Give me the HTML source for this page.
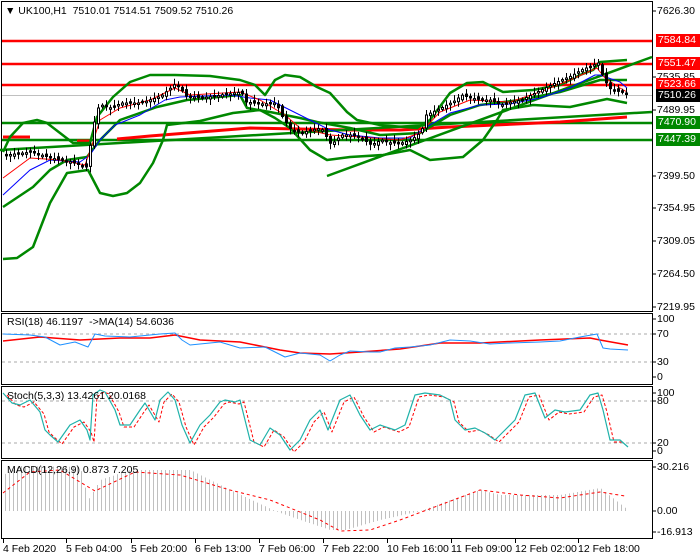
<!DOCTYPE html>
<html><head><meta charset="utf-8"><style>
html,body{margin:0;padding:0;background:#fff;width:700px;height:560px;overflow:hidden}
body{position:relative;font-family:"Liberation Sans",sans-serif;font-size:10.5px;color:#000}
.t{position:absolute;white-space:nowrap;line-height:12px}
.lb{position:absolute;left:656px;width:44px;height:13px;line-height:13px;color:#fff;padding-left:2px;box-sizing:border-box}
</style></head><body>
<svg id="s" width="700" height="560" style="position:absolute;left:0;top:0" xmlns="http://www.w3.org/2000/svg"></svg>
<div class="t" style="left:5px;top:5px">&#9660; UK100,H1&nbsp; 7510.01 7514.51 7509.52 7510.26</div>
<div class="t" style="left:7px;top:316px">RSI(18) 46.1197 &nbsp;-&gt;MA(14) 54.6036</div>
<div class="t" style="left:7px;top:390px">Stoch(5,3,3) 13.4261 20.0168</div>
<div class="t" style="left:7px;top:464px">MACD(12,26,9) 0.873 7.205</div>
<div class="t" style="left:657px;top:5px">7626.30</div>
<div class="t" style="left:657px;top:71px">7535.85</div>
<div class="t" style="left:657px;top:104px">7489.95</div>
<div class="t" style="left:657px;top:170px">7399.50</div>
<div class="t" style="left:657px;top:202px">7354.95</div>
<div class="t" style="left:657px;top:235px">7309.05</div>
<div class="t" style="left:657px;top:268px">7264.50</div>
<div class="t" style="left:657px;top:301px">7219.95</div>
<div class="lb" style="top:34px;background:#f00">7584.84</div>
<div class="lb" style="top:57px;background:#f00">7551.47</div>
<div class="lb" style="top:78px;background:#f00">7523.66</div>
<div class="lb" style="top:89px;background:#000">7510.26</div>
<div class="lb" style="top:116px;background:#080">7470.90</div>
<div class="lb" style="top:133px;background:#080">7447.39</div>
<div class="t" style="left:657px;top:313px">100</div>
<div class="t" style="left:657px;top:328px">70</div>
<div class="t" style="left:657px;top:356px">30</div>
<div class="t" style="left:657px;top:371px">0</div>
<div class="t" style="left:657px;top:387px">100</div>
<div class="t" style="left:657px;top:395px">80</div>
<div class="t" style="left:657px;top:437px">20</div>
<div class="t" style="left:657px;top:445px">0</div>
<div class="t" style="left:657px;top:461px">30.216</div>
<div class="t" style="left:657px;top:505px">0.00</div>
<div class="t" style="left:657px;top:526px">-16.913</div>
<div class="t" style="left:3px;top:543px">4 Feb 2020</div>
<div class="t" style="left:66px;top:543px">5 Feb 04:00</div>
<div class="t" style="left:131px;top:543px">5 Feb 20:00</div>
<div class="t" style="left:195px;top:543px">6 Feb 13:00</div>
<div class="t" style="left:259px;top:543px">7 Feb 06:00</div>
<div class="t" style="left:323px;top:543px">7 Feb 22:00</div>
<div class="t" style="left:387px;top:543px">10 Feb 16:00</div>
<div class="t" style="left:451px;top:543px">11 Feb 09:00</div>
<div class="t" style="left:515px;top:543px">12 Feb 02:00</div>
<div class="t" style="left:578px;top:543px">12 Feb 18:00</div>
<script>
(function(){
var S=document.getElementById('s'),h='';
function P(a,c,w,d){var s=a.map(function(p){return p[0]+','+p[1]}).join(' ');h+='<polyline points="'+s+'" fill="none" stroke="'+c+'" stroke-width="'+w+'"'+(d?' stroke-dasharray="'+d+'"':'')+' stroke-linejoin="round"/>';}
function L(x1,y1,x2,y2,c,w,d){h+='<line x1="'+x1+'" y1="'+y1+'" x2="'+x2+'" y2="'+y2+'" stroke="'+c+'" stroke-width="'+w+'"'+(d?' stroke-dasharray="'+d+'"':'')+'/>';}
function R(x,y,w,hh,f,s){h+='<rect x="'+x+'" y="'+y+'" width="'+w+'" height="'+hh+'" fill="'+f+'"'+(s?' stroke="'+s+'" stroke-width="1"':'')+'/>';}
function interp(a,x){if(x<=a[0][0])return a[0][1];for(var i=0;i<a.length-1;i++){if(x>=a[i][0]&&x<=a[i+1][0]){var t=(x-a[i][0])/(a[i+1][0]-a[i][0]);return a[i][1]+t*(a[i+1][1]-a[i][1]);}}return a[a.length-1][1];}
R(1.5,1.5,651,310,'none','#000');
R(1.5,313.5,651,71,'none','#000');
R(1.5,386.5,651,72,'none','#000');
R(1.5,460.5,651,78,'none','#000');
[11,77,110,176,208,241,274,307,319,334,362,377,393,401,443,451,467,511,532].forEach(function(y){L(652,y,656,y,'#000',1)});
[3,66,131,195,259,323,387,451,515,578].forEach(function(x){L(x+0.5,539,x+0.5,543,'#000',1)});
L(2,95.5,652,95.5,'#c0c0c0',1);
L(2,41,652,41,'#f00',2.5);L(2,64,652,64,'#f00',2.5);L(2,85,652,85,'#f00',2.5);
L(2,123,652,123,'#080',2.5);L(2,140,652,140,'#080',2.5);
P([[3,137],[30,137]],'#f00',3);
P([[77,141],[90,141]],'#f00',3);
P([[117,139],[150,136],[200,132],[250,128],[350,130],[400,130],[450,127],[560,122],[627,117]],'#f00',3);
L(327,176,652,57,'#080',2.5);
L(0,150,652,112,'#080',2.5);
P([[3,152],[10,137],[23,123],[37,120],[47,123],[60,133],[73,143],[90,143],[97,117],[113,97],[130,82],[150,75],[175,75],[210,76],[240,80],[255,85],[265,95],[275,80],[285,75],[300,77],[317,87],[330,93],[347,112],[357,120],[380,125],[417,128],[430,120],[450,93],[467,83],[483,82],[503,92],[533,90],[560,85],[580,75],[593,70],[600,62],[627,60]],'#080',2.5);
P([[3,259],[17,258],[33,247],[50,203],[67,173],[88,170],[100,193],[113,196],[127,193],[140,183],[153,163],[163,140],[167,125],[200,121],[233,113],[260,110],[275,118],[290,128],[310,150],[327,160],[350,157],[383,155],[410,150],[430,160],[463,157],[483,140],[497,120],[503,110],[533,105],[570,107],[607,99],[627,103]],'#080',2.5);
P([[3,207],[33,187],[50,170],[67,160],[87,157],[100,140],[120,120],[157,107],[187,100],[240,95],[247,108],[270,112],[300,118],[317,122],[350,128],[380,135],[420,133],[450,115],[480,105],[520,100],[560,92],[600,80],[627,80]],'#080',2.5);
var pr=[[5,155],[30,152],[50,158],[70,162],[85,167],[90,140],[95,110],[100,105],[110,108],[120,103],[140,103],[160,96],[175,83],[185,96],[200,98],[220,95],[240,92],[245,102],[260,104],[275,103],[280,115],[290,130],[300,133],[310,130],[320,128],[330,145],[340,135],[350,135],[360,138],[370,145],[380,140],[390,143],[400,143],[410,140],[420,132],[425,115],[440,108],[455,100],[460,95],[470,98],[480,100],[490,100],[500,105],[510,102],[520,100],[530,95],[540,90],[550,85],[560,80],[570,76],[580,70],[590,66],[597,63],[603,80],[610,90],[620,92],[628,95]];
P([[3,195],[30,170],[50,160],[80,162],[90,155],[100,140],[115,125],[140,115],[165,100],[180,97],[230,95],[250,98],[270,100],[290,110],[310,120],[330,130],[350,135],[380,138],[410,138],[430,125],[450,113],[480,105],[510,104],[540,98],[570,88],[595,75],[600,75],[620,82],[627,88]],'#00f',1);
P([[3,178],[30,158],[60,160],[85,165],[92,145],[100,120],[120,108],[150,100],[175,88],[190,95],[240,92],[260,100],[285,115],[300,128],[330,135],[360,137],[400,140],[420,133],[440,112],[470,100],[510,102],[540,92],[570,80],[597,68],[605,78],[620,88],[627,92]],'#f00',1);
var wd='',bb='',bw='';var k=0;var prev=155;
for(var x=5;x<=627;x+=4){k++;var c=interp(pr,x);var jit=((k*37)%7)-3;var o=prev+jit*0.6;prev=c;
var tp=Math.min(o,c),bt=Math.max(o,c);if(bt-tp<1.5)bt=tp+1.5;
var hi=tp-2-((k*13)%5),lo=bt+2+((k*17)%5);
wd+='M'+(x+1.5)+' '+hi.toFixed(1)+'V'+lo.toFixed(1);
var r='M'+(x+0.5)+' '+tp.toFixed(1)+'h2V'+bt.toFixed(1)+'h-2Z';
if(o<c)bb+=r;else bw+=r;}
h+='<path d="'+wd+'" stroke="#000" stroke-width="1" fill="none"/>';
h+='<path d="'+bb+'" fill="#000" stroke="#000" stroke-width="1"/>';
h+='<path d="'+bw+'" fill="#fff" stroke="#000" stroke-width="1"/>';
L(2,334,652,334,'#aaa',1,'3,3');L(2,362,652,362,'#aaa',1,'3,3');
P([[3,341],[40,337],[80,340],[120,338],[150,338],[175,335],[200,340],[240,342],[280,350],[300,353],[330,354],[360,352],[400,349],[440,343],[480,343],[540,340],[590,338],[600,340],[628,345]],'#f00',1.5);
P([[3,334],[30,335],[45,337],[60,345],[75,342],[88,347],[95,334],[105,336],[130,337],[160,334],[175,333],[182,340],[190,345],[220,342],[240,348],[265,347],[285,357],[300,353],[320,355],[330,361],[340,355],[350,351],[370,352],[380,352],[395,348],[410,347],[430,345],[450,340],[470,341],[490,344],[510,343],[540,342],[560,341],[580,337],[597,334],[603,348],[610,349],[628,350]],'#1e90ff',1);
L(2,401,652,401,'#aaa',1,'3,3');L(2,443,652,443,'#aaa',1,'3,3');
var st=[[3,393],[12,403],[20,405],[30,400],[40,412],[45,430],[50,435],[58,442],[70,425],[80,420],[87,430],[90,440],[93,395],[100,390],[105,392],[115,410],[120,425],[130,425],[140,410],[145,403],[155,420],[160,400],[168,392],[175,400],[182,425],[190,443],[200,425],[210,415],[220,402],[225,400],[235,402],[240,400],[250,440],[260,445],[270,428],[280,435],[290,450],[300,440],[310,420],[320,410],[328,430],[340,400],[350,395],[360,415],[370,430],[380,425],[395,430],[405,425],[415,395],[425,393],[440,395],[450,400],[455,420],[465,430],[475,428],[485,433],[495,440],[505,430],[515,420],[525,395],[535,393],[545,418],[555,410],[565,412],[580,410],[590,395],[598,393],[603,410],[610,440],[620,440],[628,447]];
P(st.map(function(p){return [p[0]+4,p[1]+2]}).filter(function(p){return p[0]<=626}),'#f00',1,'3,2');
P(st,'#20b2aa',1.2);
var mp=[[3,475],[20,466],[80,467],[88,500],[100,480],[130,470],[190,470],[230,490],[275,511],[300,520],[330,530],[345,530],[380,520],[420,511],[450,500],[480,490],[500,495],[560,495],[600,488],[615,500],[628,510]];
var hd='';for(var x2=5;x2<=628;x2+=4){hd+='M'+(x2+0.5)+' 511V'+interp(mp,x2).toFixed(1);}
h+='<path d="'+hd+'" stroke="#c0c0c0" stroke-width="1" fill="none"/>';
P([[3,493],[30,472],[60,470],[95,491],[135,472],[180,475],[230,490],[270,500],[320,520],[340,531],[370,530],[400,520],[440,505],[480,490],[520,495],[560,498],[600,492],[625,496]],'#f00',1,'3,3');
S.innerHTML=h;
})();
</script>
</body></html>
